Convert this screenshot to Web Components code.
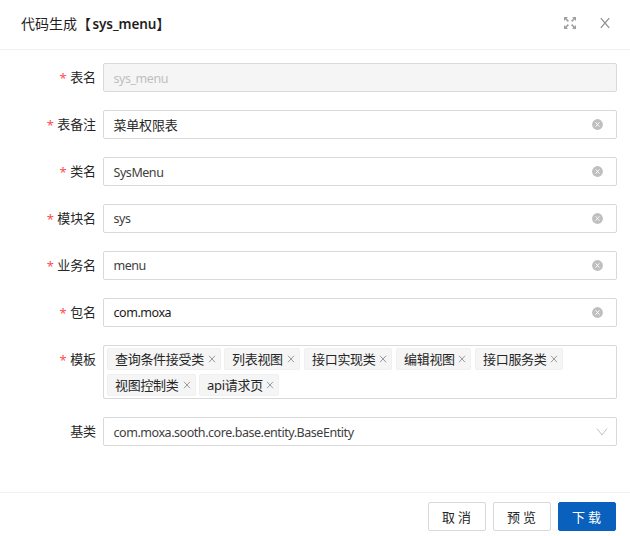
<!DOCTYPE html>
<html lang="zh-CN"><head><meta charset="utf-8"><title>代码生成</title>
<style>
body{margin:0;background:#fff;font:13px/20px "Noto Sans","Noto Sans CJK SC",sans-serif;color:#262626;overflow:hidden}
b{font-weight:600;font-size:13.5px;margin-left:1.5px;letter-spacing:-.1px}
</style></head><body>
<gen-dialog>
<span slot="title">代码生成【<b>sys_menu</b>】</span>
<form-row label="表名" required><text-field disabled low>sys_menu</text-field></form-row>
<form-row label="表备注" required><text-field cjk>菜单权限表</text-field></form-row>
<form-row label="类名" required><text-field low>SysMenu</text-field></form-row>
<form-row label="模块名" required><text-field>sys</text-field></form-row>
<form-row label="业务名" required><text-field>menu</text-field></form-row>
<form-row label="包名" required><text-field dark>com.moxa</text-field></form-row>
<form-row label="模板" required><tag-select><tag-item style="width:114px;margin-right:3px">查询条件接受类</tag-item><tag-item style="width:76px">列表视图</tag-item><tag-item style="width:88px">接口实现类</tag-item><tag-item style="width:75px">编辑视图</tag-item><tag-item style="width:88px">接口服务类</tag-item><tag-item style="width:89px;margin-right:3px">视图控制类</tag-item><tag-item style="width:80px">api请求页</tag-item></tag-select></form-row>
<form-row label="基类"><text-field select low>com.moxa.sooth.core.base.entity.BaseEntity</text-field></form-row>
<dialog-button slot="footer">取消</dialog-button>
<dialog-button slot="footer">预览</dialog-button>
<dialog-button slot="footer" primary>下载</dialog-button>
</gen-dialog>
<script>
const define=(name,render)=>customElements.define(name,class extends HTMLElement{
  connectedCallback(){if(!this.shadowRoot)this.attachShadow({mode:'open'}).innerHTML=render(this)}
});
define('gen-dialog',()=>`<style>
:host{display:flex;flex-direction:column;height:536px;box-sizing:border-box}
header{height:48px;padding:1px 19px 0 21px;border-bottom:1px solid #f0f0f0;display:flex;align-items:center}
.title{flex:1;font-size:14px;line-height:22px;font-weight:400;color:#1f1f1f;white-space:nowrap;padding-bottom:2px}
svg{display:block;margin-bottom:4px}
.close{margin-left:22px}
main{flex:1;padding:13px 13px 0 0;display:flex;flex-direction:column;gap:18px}
footer{height:44px;border-top:1px solid #f0f0f0;display:flex;justify-content:flex-end;gap:7px;padding:9px 14px 0 0;box-sizing:border-box}
</style>
<header><div class="title"><slot name="title"></slot></div>
<svg width="14" height="14" viewBox="0 0 14 14" fill="#a0a0a0" stroke="#a0a0a0"><path d="M1 1h4L1 5zM13 1v4L9 1zM1 13V9L5 13zM13 13H9L13 9z" stroke="none"/><path d="M2.5 2.5 5.4 5.4M11.5 2.5 8.6 5.4M2.5 11.5 5.4 8.6M11.5 11.5 8.6 8.6" stroke-width="1.6"/></svg>
<svg class="close" width="12" height="12" viewBox="0 0 12 12" fill="none" stroke="#8c8c8c" stroke-width="1.2"><path d="M1.8 1.2 10.2 10.8M10.2 1.2 1.8 10.8"/></svg></header>
<main><slot></slot></main><footer><slot name="footer"></slot></footer>`);
define('form-row',e=>`<style>
:host{display:flex;align-items:flex-start}
label{width:96px;margin-right:7px;height:29px;line-height:28px;text-align:right;white-space:nowrap;flex:none;letter-spacing:-.1px}
i{font:13px/13px "Noto Sans",sans-serif;color:#ff4d4f;margin-right:3.5px;display:inline-block;vertical-align:-1px}
::slotted(*){flex:1;min-width:0}
</style><label>${e.hasAttribute('required')?'<i>*</i>':''}${e.getAttribute('label')}</label><slot></slot>`);
define('text-field',e=>`<style>
:host{display:flex;align-items:center;height:29px;box-sizing:border-box;border:1px solid #d9d9d9;border-radius:2px;padding:0 13px 0 9.5px;color:#404040;white-space:nowrap;font-size:12.5px}
:host([cjk]){font-size:13px;color:#262626}
:host([disabled]){background:#f5f5f5;color:#bfbfbf}
:host([dark]){color:#1a1a1a}
:host([select]){padding-right:8px}
span{flex:1;letter-spacing:-.45px;padding-top:1px}:host([cjk]) span{letter-spacing:-.2px}:host([low]) span{padding-top:2px}svg{display:block}
</style><span><slot></slot></span>${e.hasAttribute('disabled')?'':e.hasAttribute('select')?
'<svg width="12" height="10" viewBox="0 0 12 10" fill="none" stroke="#bfbfbf"><path d="M1 1.5 6 8 11 1.5"/></svg>':
'<svg width="11" height="11" viewBox="0 0 11 11"><circle cx="5.5" cy="5.5" r="5.4" fill="#bfbfbf"/><path d="M3.5 3.3 7.5 7.7M7.5 3.3 3.5 7.7" stroke="#fff" stroke-width=".9"/></svg>'}`);
define('tag-select',()=>`<style>
:host{display:flex;flex-wrap:wrap;align-content:flex-start;height:54px;box-sizing:border-box;border:1px solid #d9d9d9;border-radius:2px;padding:2px 3px}
::slotted(*){margin:0 4px 4px 0}
</style><slot></slot>`);
define('tag-item',()=>`<style>
:host{display:flex;align-items:center;height:22px;box-sizing:border-box;border:1px solid #f0f0f0;border-radius:2px;background:#f5f5f5;padding:0 4.5px 0 7px;white-space:nowrap;letter-spacing:-.3px}
span{flex:1}svg{display:block}
</style><span><slot></slot></span><svg width="8" height="8" viewBox="0 0 8 8" stroke="#999" stroke-width="1"><path d="M1 .8 7 7.2M7 .8 1 7.2"/></svg>`);
define('dialog-button',()=>`<style>
:host{width:58px;height:29px;box-sizing:border-box;border:1px solid #d9d9d9;border-radius:2px;display:flex;align-items:center;justify-content:center;letter-spacing:3px;padding-left:2px;white-space:nowrap}
:host([primary]){background:#0960bd;border-color:#0960bd;color:#fff}
</style><slot></slot>`);
</script></body></html>
